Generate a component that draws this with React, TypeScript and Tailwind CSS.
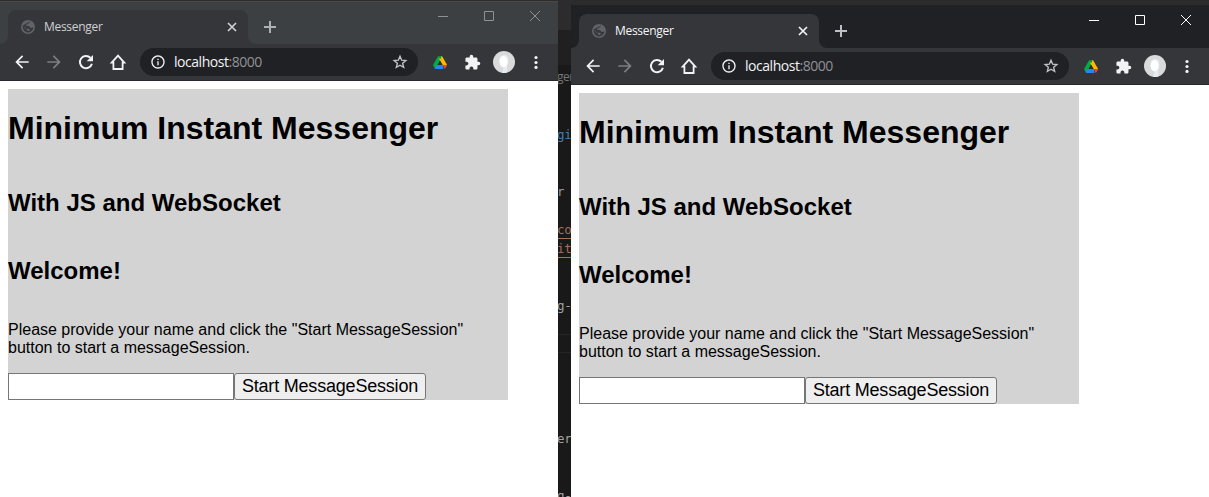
import React from "react";
import { MdInfoOutline, MdArrowBack, MdArrowForward, MdExtension } from "react-icons/md";

function GlobeIcon() {
  return (
    <svg width="14" height="14" viewBox="0 0 14 14">
      <circle cx="7" cy="7" r="7" fill="#606367" />
      <path d="M8.700 1.400c0 1.200-.5 1.900-1.700 1.900-.2 1-.9 1.400-1.900 1.400v1.200h2.600c1 0 1.300.8 1.300 1.800 1.100 0 2.300.1 3.600-.3-.6 2.400-2.300 4.500-5.100 5v-1.500c-1.100 0-1.800-.7-1.800-1.900L1.600 5.300c-.3 3.600 1.800 6.700 5 7.200l.9-.1v-1.300c.8 0 1.100-.4 1.100-1.100 0-.7-.3-1.200-1.200-1.200H4.300L1.700 5.600z" fill="#37383c" />
    </svg>
  );
}

function RefreshIcon() {
  return (
    <svg width="16" height="16" viewBox="0 0 16 16" fill="none">
      <path d="M13.900 9.700A6.100 6.100 0 1 1 12.400 3.800" stroke="currentColor" strokeWidth="2" />
      <path d="M15 1v6.300H8.700z" fill="currentColor" />
    </svg>
  );
}

function StarIcon() {
  return (
    <svg width="16" height="16" viewBox="0 0 16 16" fill="none" stroke="#bfc1c4" strokeWidth="1.400">
      <path d="m8 2.300 1.650 3.900 4.200.35-3.200 2.750 1 4.100L8 11.200l-3.650 2.200 1-4.100-3.200-2.750 4.200-.35z" />
    </svg>
  );
}

function HomeIcon() {
  return (
    <svg width="18" height="18" viewBox="0 0 18 18" fill="none" stroke="#f1f3f4" strokeWidth="1.800">
      <path d="M4.400 16V9.700H2.700L9 2.700l6.300 7h-1.700V16z" />
    </svg>
  );
}

function DriveIcon() {
  return (
    <svg width="14" height="13" viewBox="0 0 14 13">
      <path d="M4.800.8Q5.200 0 6 0h1.400L8.600 2.800 3 12.600Q2 12.600 1.500 11.700L.3 9.700Q0 9 .3 8.400z" fill="#00ac47" />
      <path d="M7 0h1.300q.7 0 1.100.7l4.300 7.600q.3.600.1 1.100H9.900L5.800 2.500z" fill="#ffba00" />
      <path d="M7 0 5.300 0 7 3.400 8.600.2z" fill="#00903b" />
      <path d="M3.700 9h6.500v4H3q-1 0-1.500-1z" fill="#2684fc" />
      <path d="M9.900 9H14q0 .7-.4 1.300l-1 1.800q-.4.700-1 .9z" fill="#ea4335" />
      <path d="M7 4.600 9.500 9h-5z" fill="#2b2c30" />
    </svg>
  );
}

function Avatar() {
  return (
    <svg width="22" height="22" viewBox="0 0 22 22">
      <circle cx="11" cy="11" r="11" fill="#dadada" />
      <path d="M11.200 4c3 0 4.200 2.200 4.200 5.500 0 3-.9 4.800-1.300 6.300l.2 5.700a11 11 0 0 1-5.500.3l1.900-5C8 16.500 6.500 13.500 6.500 9.800 6.500 6.200 8.200 4 11.200 4z" fill="#e6edf2" />
      <ellipse cx="10.500" cy="10.500" rx="3.900" ry="5.600" fill="#fff" />
    </svg>
  );
}

function TabFoot({ flip }: { flip?: boolean }) {
  return (
    <svg width="8" height="8" viewBox="0 0 8 8" className={flip ? "-scale-x-100" : ""}>
      <path d="M8 0v8H0a8 8 0 0 0 8-8z" fill="#35363a" />
    </svg>
  );
}

function WindowButtons({ active }: { active: boolean }) {
  return (
    <div className={`flex gap-9 pr-[18px] ${active ? "pt-[10px] text-white" : "pt-[9px] text-[#8f9193]"}`}>
      <svg width="10" height="10" viewBox="0 0 10 10" stroke="currentColor"><path d="M0 5.500h10" /></svg>
      <svg width="10" height="10" viewBox="0 0 10 10" stroke="currentColor" fill="none"><path d="M.5.5h9v9h-9z" /></svg>
      <svg width="10" height="10" viewBox="0 0 10 10" stroke="currentColor"><path d="m0 0 10 10M10 0 0 10" /></svg>
    </div>
  );
}

function TabStrip({ active }: { active: boolean }) {
  return (
    <div className={`flex h-[43px] justify-between ${active ? "bg-[#202124]" : "border-t border-[#4a4a4a] bg-[#3c4043]"}`}>
      <div className="flex items-end">
        <TabFoot />
        <div className={`flex h-[34px] w-60 items-center rounded-t-lg bg-[#35363a] pr-[11px] pl-[13px] ${active ? "text-[#f4f5f6]" : "text-[#cfd1d4]"}`}>
          <GlobeIcon />
          <span className="ml-[9px] flex-1 font-['Open_Sans','Noto_Sans',sans-serif] text-[12px] leading-4 tracking-[-0.3px]">Messenger</span>
          <svg width="10" height="10" viewBox="0 0 10 10" stroke="currentColor" strokeWidth="1.700"><path d="m1 1 8 8M9 1 1 9" /></svg>
        </div>
        <TabFoot flip />
        <svg width="12" height="12" viewBox="0 0 12 12" className="mb-[11px] ml-2" stroke={active ? "#bdc1c6" : "#aeb1b4"} strokeWidth="2"><path d="M6 0v12M0 6h12" /></svg>
      </div>
      <WindowButtons active={active} />
    </div>
  );
}

function Toolbar() {
  return (
    <div className="flex h-[37px] items-start border-b border-[#28292c] bg-[#35363a] text-[#f1f3f4]">
      <div className="flex h-9 items-center gap-3 pl-3">
        <MdArrowBack size={20} />
        <MdArrowForward size={20} className="text-[#7d7e81]" />
        <span className="flex w-5 justify-center"><RefreshIcon /></span>
        <span className="flex w-5 justify-center"><HomeIcon /></span>
      </div>
      <div className="mt-1 ml-3 flex h-7 flex-1 items-center rounded-full bg-[#202124] pr-2.5 pl-[10px]">
        <MdInfoOutline size={16} />
        <span className="ml-2 flex-1 font-['Open_Sans','Noto_Sans',sans-serif] text-[14px] leading-5 tracking-[-0.460px]">
          localhost<span className="text-[#909295]">:8000</span>
        </span>
        <StarIcon />
      </div>
      <div className="flex h-9 w-[140px] items-center pl-[12px]">
        <span className="flex w-5 justify-center"><DriveIcon /></span>
        <span className="ml-3 flex w-5 justify-center"><MdExtension size={17} /></span>
        <span className="ml-[11px]"><Avatar /></span>
        <svg width="4" height="14" viewBox="0 0 4 14" fill="currentColor" className="ml-[19px]">
          <circle cx="2" cy="2.500" r="1.600" /><circle cx="2" cy="7.500" r="1.600" /><circle cx="2" cy="12.400" r="1.600" />
        </svg>
      </div>
    </div>
  );
}

function MessengerPage() {
  return (
    <div className="flex-1 bg-white p-2">
      <main className="h-[311px] w-[500px] bg-[#d3d3d3] pt-[21px] font-['Liberation_Sans',Arial,sans-serif] text-black">
        <h1 className="text-[32px] leading-[37px] font-bold">Minimum Instant Messenger</h1>
        <h2 className="mt-[42px] text-2xl leading-7 font-bold">With JS and WebSocket</h2>
        <h2 className="mt-10 text-2xl leading-7 font-bold">Welcome!</h2>
        <p className="mt-9 text-base leading-[18px]">
          Please provide your name and click the "Start MessageSession"<br />button to start a messageSession.
        </p>
        <form className="mt-4 flex h-[27px]" onSubmit={(e) => e.preventDefault()}>
          <input aria-label="Name" className="w-[226px] border border-[#767676] bg-white px-1 text-lg outline-none" />
          <button type="button" className="w-48 rounded-[3px] border border-[#767676] bg-[#efefef] text-[18px] leading-[25px] tracking-[-0.200px] whitespace-nowrap">Start MessageSession</button>
        </form>
      </main>
    </div>
  );
}

function BrowserWindow({ active = false }: { active?: boolean }) {
  return (
    <section className={`flex flex-col ${active ? "mt-[5px] h-[492px] w-[638px]" : "mt-px h-[496px] w-[558px]"}`}>
      <TabStrip active={active} />
      <Toolbar />
      <MessengerPage />
    </section>
  );
}

const codeLines: { text: string; tone: string }[] = [
  { text: "gi", tone: "text-[#3f80b3]" },
  { text: "", tone: "" },
  { text: "", tone: "" },
  { text: "r", tone: "text-[#999999]" },
  { text: "", tone: "" },
  { text: "co", tone: "text-[#a66f57] border-b border-[#a66f57]" },
  { text: "it", tone: "text-[#a66f57] border-b border-[#a66f57]" },
  { text: "", tone: "" },
  { text: "", tone: "" },
  { text: "g-", tone: "text-[#a0a0a0]" },
  { text: "", tone: "" },
  { text: "", tone: "border-y border-[#252525]" },
  { text: "", tone: "" },
  { text: "", tone: "" },
  { text: "", tone: "" },
  { text: "", tone: "" },
  { text: "er", tone: "text-[#a0a0a0]" },
  { text: "", tone: "" },
  { text: "", tone: "" },
  { text: "g-", tone: "text-[#a0a0a0]" },
];

function EditorStrip() {
  return (
    <aside className="flex h-[497px] w-[13px] flex-col overflow-hidden bg-[#191919]">
      <div className="h-[30px] shrink-0 bg-[#2c2c2c]" />
      <div className="h-[35px] shrink-0 bg-[#202020]" />
      <div className="-ml-px h-[60px] shrink-0 font-['Open_Sans',sans-serif] text-[12px] leading-6 tracking-[-0.500px] text-[#777777]">ger</div>
      {codeLines.map((line, i) => (
        <div key={i} className={`-ml-px h-[19px] shrink-0 font-['DejaVu_Sans_Mono',monospace] text-[12.500px] leading-5 tracking-[-0.300px] whitespace-pre ${line.tone}`}>
          {line.text}
        </div>
      ))}
    </aside>
  );
}

export default function App() {
  return (
    <div className="flex h-[497px] w-[1209px] overflow-hidden bg-[#2c2c2c]">
      <BrowserWindow />
      <EditorStrip />
      <BrowserWindow active />
    </div>
  );
}
